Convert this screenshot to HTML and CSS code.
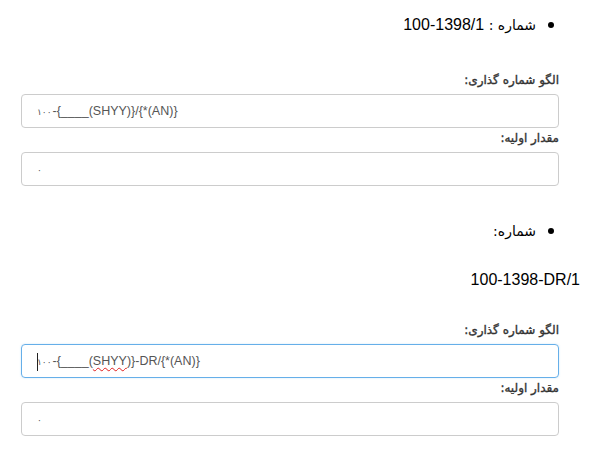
FILE: index.html
```html
<!DOCTYPE html>
<html lang="fa" dir="rtl">
<head>
<meta charset="utf-8">
<title>الگو شماره گذاری</title>
<link rel="stylesheet" href="styles.css">
</head>
<body>
<ul class="items first">
  <li>شماره : <bdi class="latin" lang="en">100-1398/1</bdi></li>
</ul>
<div class="form">
  <div class="group">
    <label class="label">الگو شماره گذاری:</label>
    <div class="control" lang="en"><span class="fa-digits" lang="fa">۱۰۰</span>-{____(SHYY)}/{*(AN)}</div>
  </div>
  <div class="group">
    <label class="label">مقدار اولیه:</label>
    <div class="control" lang="en"><span class="fa-digits" lang="fa">۰</span></div>
  </div>
</div>
<ul class="items second">
  <li>شماره:</li>
</ul>
<p class="number" dir="ltr" lang="en">100-1398-DR/1</p>
<div class="form second-form">
  <div class="group">
    <label class="label">الگو شماره گذاری:</label>
    <div class="control focused" lang="en"><span class="caret"></span><span class="fa-digits" lang="fa">۱۰۰</span>-{____(<span class="misspelled">SHYY</span>)}-DR/{*(AN)}</div>
  </div>
  <div class="group">
    <label class="label">مقدار اولیه:</label>
    <div class="control" lang="en"><span class="fa-digits" lang="fa">۰</span></div>
  </div>
</div>
</body>
</html>
```

FILE: styles.css
```css
html, body {
  margin: 0;
  padding: 0;
  background: #fff;
}

body {
  direction: rtl;
  font-family: "Liberation Sans", "DejaVu Sans", sans-serif;
  font-size: 16px;
  color: #000;
}

.latin {
  font-family: "Liberation Sans", sans-serif;
}

.items {
  margin: 0;
  padding: 0 64px 0 0;
  list-style: disc;
}

.items li {
  height: 19px;
  line-height: 19px;
  font-family: "DejaVu Sans", sans-serif;
  font-size: 14px;
}

.items li::marker {
  font-size: 18px;
}

.items li .latin {
  font-size: 16px;
}

.items.first {
  margin-top: 14px;
}

.items.second {
  margin-top: 34px;
}

.form {
  margin: 39px 41px 0 21px;
}

.second-form {
  margin-top: 33px;
}

.group + .group .label {
  margin-top: 2px;
}

.label {
  display: block;
  font-family: "DejaVu Sans", sans-serif;
  font-weight: normal;
  font-size: 12px;
  line-height: 17px;
  color: #333;
  -webkit-text-stroke: 0.35px #333;
  margin: 0 0 5px;
}

.control {
  direction: ltr;
  text-align: left;
  box-sizing: border-box;
  height: 34px;
  border: 1px solid #ccc;
  border-radius: 4px;
  padding: 0 15px;
  font-family: "Liberation Sans", sans-serif;
  font-size: 12.5px;
  line-height: 32px;
  color: #555;
  white-space: nowrap;
}

.fa-digits {
  font-family: "DejaVu Sans", sans-serif;
  font-size: 9px;
  letter-spacing: -1px;
  margin-right: 1px;
}

.control.focused {
  border-color: #66afe9;
  box-shadow: 0 0 2px rgba(102, 175, 233, 0.35);
}

.caret {
  display: inline-block;
  width: 1px;
  height: 18px;
  background: #222;
  vertical-align: middle;
  margin-right: -1px;
}

.misspelled {
  text-decoration: underline wavy #e02020;
  text-decoration-thickness: 1px;
  text-underline-offset: 2px;
}

.number {
  margin: 31px 20px 0 0;
  line-height: 19px;
  text-align: right;
  font-family: "Liberation Sans", sans-serif;
}
```
